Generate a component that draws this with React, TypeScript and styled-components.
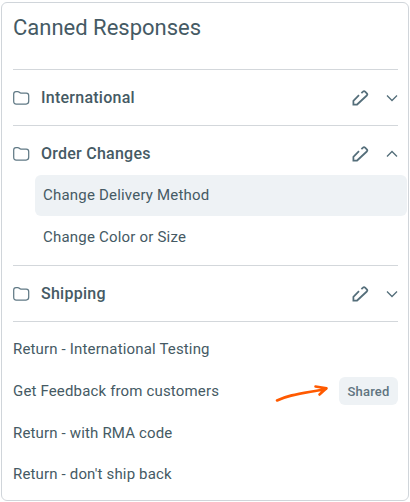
import React from "react";
import styled, { createGlobalStyle } from "styled-components";

const GlobalStyle = createGlobalStyle`
  body { margin: 0; background: #fff; }
  * { box-sizing: border-box; }
`;

const Card = styled.main`
  width: 408px;
  height: 499px;
  margin: 2px 1px 0;
  border: 1px solid #d0d5da;
  border-radius: 6px;
  background: #fff;
  padding: 0 10px 0 11px;
  color: #455a64;
  font-family: Roboto, sans-serif;
  display: flow-root;
`;

const Title = styled.h1`
  margin: 0;
  height: 66px;
  padding-top: 10px;
  font-size: 22px;
  line-height: 30px;
  font-weight: 400;
  letter-spacing: 0;
`;

const Group = styled.section`
  border-top: 1px solid #d3d7db;
`;

const GroupHeader = styled.header`
  display: flex;
  align-items: center;
  height: 55px;
`;

const GroupName = styled.h2`
  flex: 1;
  margin: 0 0 0 11px;
  font-size: 16px;
  line-height: 24px;
  font-weight: 500;
  letter-spacing: 0.25px;
`;

const IconButton = styled.button`
  display: flex;
  border: 0;
  padding: 0;
  margin-left: 17px;
  background: none;
  color: #546e7a;
`;

const SubList = styled.div`
  margin: -6px -9px 7px 22px;
`;

const SubItem = styled.div<{ $active?: boolean }>`
  display: flex;
  align-items: center;
  height: 41px;
  padding: 0 0 2px 8px;
  margin-bottom: 1px;
  border-radius: 6px;
  background: ${(p) => (p.$active ? "#eef2f5" : "transparent")};
  font-size: 15px;
  letter-spacing: 0.2px;
`;

const Responses = styled.div`
  border-top: 1px solid #d3d7db;
  padding-top: 6px;
`;

const Response = styled.div`
  display: flex;
  align-items: center;
  height: 42px;
  font-size: 15px;
  letter-spacing: 0.16px;

  &:last-child {
    height: 40px;
  }
`;

const Arrow = styled.svg`
  margin-left: auto;
  margin-right: 10px;
`;

const Badge = styled.span`
  display: flex;
  align-items: center;
  justify-content: center;
  width: 59px;
  height: 28px;
  border-radius: 6px;
  background: #eef2f5;
  color: #607480;
  font-size: 13px;
  font-weight: 500;
  letter-spacing: 0.2px;
`;

const FolderIcon = () => (
  <svg width="17" height="16" viewBox="0 0 17 16" fill="none" stroke="#607985" strokeWidth="1.25">
    <path d="M.7 4.100c0-1.700.8-2.500 2.300-2.500h1.800c1.500 0 1.600 1.500 3.200 1.500h5.300c1.600 0 2.400.8 2.400 2.400v5.800c0 1.800-.8 2.700-2.600 2.700H3.300C1.500 14 .7 13.100.7 11.300z" />
  </svg>
);

const PenIcon = () => (
  <svg width="17" height="16" viewBox="0 0 17 16" fill="none" stroke="currentColor" strokeWidth="1.750">
    <path d="M7 5.200 1.400 10.800v3.700h3.700L14.800 5.500c.7-.7.7-1.400 0-2.100l-1.700-1.700c-.7-.7-1.400-.7-2.100 0L9.400 3.200" />
  </svg>
);

const Chevron = ({ up }: { up?: boolean }) => (
  <svg width="12" height="16" viewBox="0 0 12 16" fill="none" stroke="currentColor" strokeWidth="1.3">
    <path d={up ? "M1 10.500l5-5 5 5" : "M1 5.500l5 5 5-5"} />
  </svg>
);

const Folder = ({ name, open, children }: { name: string; open?: boolean; children?: React.ReactNode }) => (
  <Group>
    <GroupHeader>
      <FolderIcon />
      <GroupName>{name}</GroupName>
      <IconButton aria-label={`Edit ${name}`}><PenIcon /></IconButton>
      <IconButton aria-label={`Toggle ${name}`} aria-expanded={!!open}><Chevron up={open} /></IconButton>
    </GroupHeader>
    {children}
  </Group>
);

export default function App() {
  return (
    <>
      <GlobalStyle />
      <Card>
        <Title>Canned Responses</Title>
        <Folder name="International" />
        <Folder name="Order Changes" open>
          <SubList>
            <SubItem $active>Change Delivery Method</SubItem>
            <SubItem>Change Color or Size</SubItem>
          </SubList>
        </Folder>
        <Folder name="Shipping" />
        <Responses>
          <Response>Return - International Testing</Response>
          <Response>
            Get Feedback from customers
            <Arrow width="54" height="24" viewBox="0 0 54 24" fill="none" stroke="#ff5a00" strokeWidth="2.600" strokeLinecap="round" strokeLinejoin="round">
              <path d="M2 21.500C14 15.500 27 14.500 51 10M40.500 7.500 51.500 9.300 44.500 15.500" />
            </Arrow>
            <Badge>Shared</Badge>
          </Response>
          <Response>Return - with RMA code</Response>
          <Response>Return - don't ship back</Response>
        </Responses>
      </Card>
    </>
  );
}
